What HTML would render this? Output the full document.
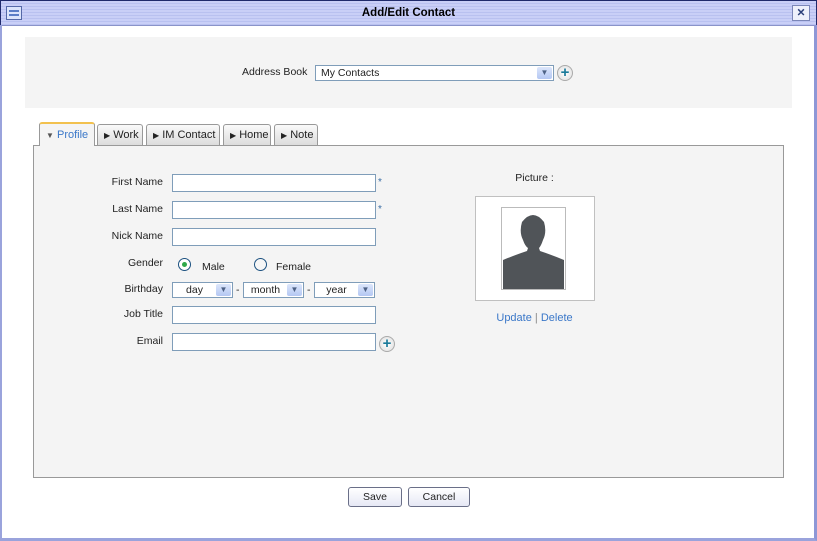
<!DOCTYPE html>
<html><head><style>
*{margin:0;padding:0;box-sizing:border-box}
body{width:817px;height:541px;position:relative;overflow:hidden;background:#fff;font-family:"Liberation Sans",sans-serif;font-size:10.5px;color:#222}
.a{position:absolute}
.title{left:0;top:0;width:817px;height:26px;border:1px solid #1f2a6b;border-bottom:1px solid #8a93c9;background:repeating-linear-gradient(#c9cff7 0 2px,#b9c1f0 2px 3px)}
.frame{left:0;top:25px;width:817px;height:516px;border-left:2px solid #9aa3dc;border-right:3px solid #8e97d6;border-bottom:3px solid #9aa3dc}
.inp{position:absolute;height:18px;width:204px;background:#fff;border:1px solid #7f9db9}
.lbl{position:absolute;width:100px;text-align:right;left:63px}
.sel{position:absolute;height:16px;background:#fff;border:1px solid #7f9db9;text-align:center;line-height:14px}
.dd{position:absolute;right:1px;top:1px;width:15px;height:12px;background:linear-gradient(#dce6fb,#b4c7f3);border-radius:2px;color:#4d6185;font-size:8px;line-height:12px;text-align:center}
.tab{position:absolute;top:124px;height:21px;border:1px solid #999;border-bottom:none;border-radius:3px 3px 0 0;background:linear-gradient(#fafafa,#dcdcdc);line-height:20px;padding-left:6px;font-size:11px;color:#222}
.plus{position:absolute;width:16px;height:16px;border-radius:50%;border:1px solid #aaa;background:radial-gradient(#fff,#ddd);color:#1a7a9a;font-weight:bold;font-size:15px;line-height:13px;text-align:center}
.btn{position:absolute;top:487px;height:20px;border:1px solid #6a6f88;border-radius:3px;background:linear-gradient(#fff,#e6e8f5);text-align:center;line-height:18px}
.star{position:absolute;left:378px;color:#3b6ea5;font-size:10px}
</style></head><body>
<div class="a title"></div>
<div class="a" style="left:6px;top:6px;width:16px;height:14px;border:1px solid #5569a8;background:#dbe4fb"><div style="margin:3px 2px;height:6px;border-top:2px solid #5a7dc6;border-bottom:2px solid #5a7dc6"></div></div>
<div class="a" style="left:0;top:7px;width:817px;text-align:center;font-weight:bold;font-size:11.5px;color:#000">Add/Edit Contact</div>
<div class="a" style="left:792px;top:5px;width:18px;height:16px;border:1px solid #7b86b8;background:#eef0fb;text-align:center;line-height:14px;font-weight:bold;color:#2b3f7a">✕</div>
<div class="a frame"></div>

<div class="a" style="left:25px;top:37px;width:767px;height:71px;background:#f4f4f4"></div>
<div class="a" style="left:242px;top:66px">Address Book</div>
<div class="sel" style="left:315px;top:65px;width:239px;text-align:left;padding-left:5px">My Contacts<div class="dd">▼</div></div>
<div class="plus" style="left:557px;top:65px">+</div>

<div class="a" style="left:33px;top:145px;width:751px;height:333px;border:1px solid #999;background:#f4f4f4"></div>
<div class="tab" style="left:39px;top:122px;width:56px;height:24px;border-top:2px solid #f2c14e;background:#f4f4f4;color:#3a77c8;line-height:22px"><span style="color:#555;font-size:8px">▼</span> Profile</div>
<div class="tab" style="left:97px;width:46px"><span style="font-size:8px">▶</span> Work</div>
<div class="tab" style="left:146px;width:74px"><span style="font-size:8px">▶</span> IM Contact</div>
<div class="tab" style="left:223px;width:48px"><span style="font-size:8px">▶</span> Home</div>
<div class="tab" style="left:274px;width:44px"><span style="font-size:8px">▶</span> Note</div>

<div class="lbl" style="top:176px">First Name</div><div class="inp" style="left:172px;top:174px"></div><div class="star" style="top:177px">*</div>
<div class="lbl" style="top:203px">Last Name</div><div class="inp" style="left:172px;top:201px"></div><div class="star" style="top:204px">*</div>
<div class="lbl" style="top:230px">Nick Name</div><div class="inp" style="left:172px;top:228px"></div>
<div class="lbl" style="top:257px">Gender</div>
<div class="a" style="left:178px;top:258px;width:13px;height:13px;border:1px solid #1c5180;border-radius:50%;background:#fff"><div style="margin:3px;width:5px;height:5px;border-radius:50%;background:#2fa84a"></div></div>
<div class="a" style="left:202px;top:261px">Male</div>
<div class="a" style="left:254px;top:258px;width:13px;height:13px;border:1px solid #1c5180;border-radius:50%;background:#f6f6f6"></div>
<div class="a" style="left:276px;top:261px">Female</div>
<div class="lbl" style="top:283px">Birthday</div>
<div class="sel" style="left:172px;top:282px;width:61px;padding-right:16px">day<div class="dd">▼</div></div>
<div class="a" style="left:236px;top:284px">-</div>
<div class="sel" style="left:243px;top:282px;width:61px;padding-right:16px">month<div class="dd">▼</div></div>
<div class="a" style="left:307px;top:284px">-</div>
<div class="sel" style="left:314px;top:282px;width:61px;padding-right:16px">year<div class="dd">▼</div></div>
<div class="lbl" style="top:308px">Job Title</div><div class="inp" style="left:172px;top:306px"></div>
<div class="lbl" style="top:335px">Email</div><div class="inp" style="left:172px;top:333px"></div>
<div class="plus" style="left:379px;top:336px">+</div>

<div class="a" style="left:475px;top:172px;width:119px;text-align:center">Picture :</div>
<div class="a" style="left:475px;top:196px;width:120px;height:105px;border:1px solid #c0c0c0;background:#fff"></div>
<div class="a" style="left:501px;top:207px;width:65px;height:83px;border:1px solid #bbb;background:#fff;overflow:hidden">
<svg width="63" height="81" viewBox="0 0 63 81"><path d="M20 14 Q31 0 42 14 Q45 24 41 32 Q39 38 37 40 L38 43 Q50 47 62 52 L62 81 L1 81 L1 52 Q13 47 25 43 L26 40 Q23 38 21 32 Q17 24 20 14Z" fill="#505458"/></svg></div>
<div class="a" style="left:475px;top:312px;width:119px;text-align:center;color:#3a77c8;font-size:11px">Update <span style="color:#888">|</span> Delete</div>

<div class="btn" style="left:348px;width:54px">Save</div>
<div class="btn" style="left:408px;width:62px">Cancel</div>
</body></html>
